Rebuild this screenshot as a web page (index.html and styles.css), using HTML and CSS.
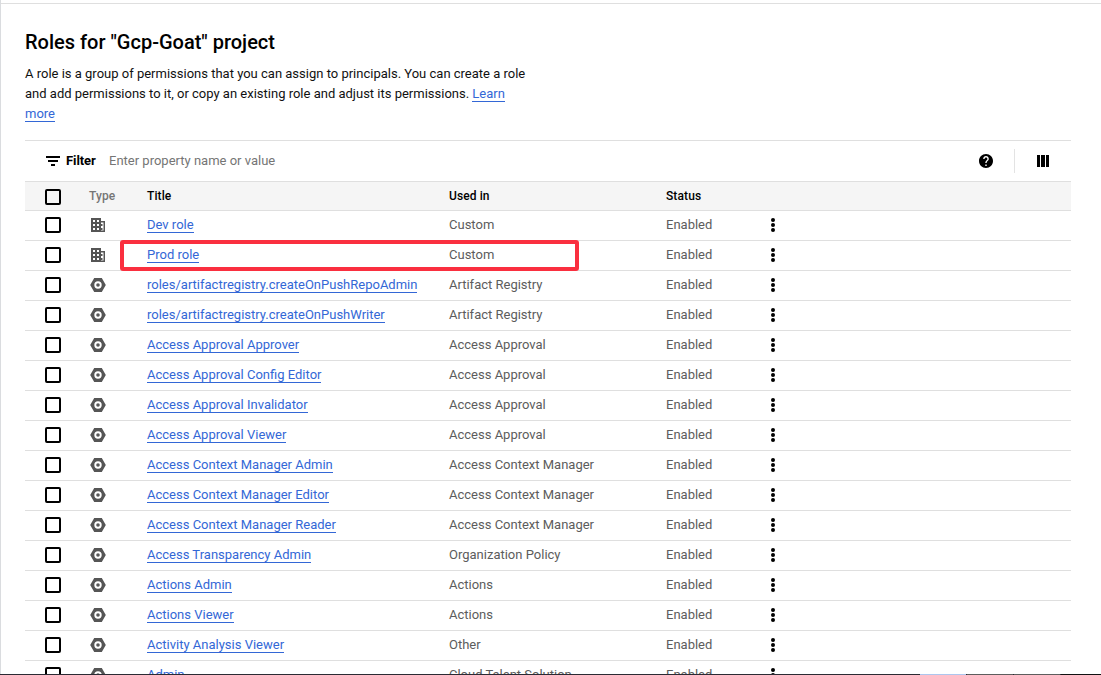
FILE: index.html
```html
<!DOCTYPE html>
<html lang="en">
<head>
<meta charset="utf-8">
<title>Roles</title>
<link rel="stylesheet" href="styles.css">
</head>
<body>
<svg class="defs" aria-hidden="true">
  <symbol id="org" viewBox="0 0 14 14"><path fill-rule="evenodd" d="M0 0h10v3h4v11H0zM2 2v2h2V2zM6 2v2h2V2zM2 6v2h2V6zM6 6v2h2V6zM2 10v2h2v-2zM6 10v2h2v-2zM10 4.500v1.500h1.500v2H10v2h1.500v2H10v.5h2.500v-8z"/></symbol>
  <symbol id="hex" viewBox="0 0 16 14"><path fill-rule="evenodd" d="M4.200 0h7.600L15.800 7l-4 7H4.200L.2 7zM8 3.300a3.700 3.700 0 1 0 0 7.400 3.700 3.700 0 0 0 0-7.400z"/><circle cx="8" cy="7" r="1.800"/></symbol>
  <symbol id="dots" viewBox="0 0 4 14"><circle cx="2" cy="2" r="2"/><circle cx="2" cy="7" r="2"/><circle cx="2" cy="12" r="2"/></symbol>
</svg>
<main class="page">
  <h1 class="title">Roles for "Gcp-Goat" project</h1>
  <p class="intro">A role is a group of permissions that you can assign to principals. You can create a role and add permissions to it, or copy an existing role and adjust its permissions. <a class="link">Learn more</a></p>
  <div class="filter">
    <svg class="filter-icon" viewBox="0 0 14 10"><path d="M0 0h14v2H0zM2 4h10v2H2zM5 8h4v2H5z"/></svg>
    <span class="filter-label">Filter</span>
    <span class="filter-hint">Enter property name or value</span>
    <svg class="help" viewBox="2 2 20 20"><path d="M12 2C6.480 2 2 6.480 2 12s4.480 10 10 10 10-4.480 10-10S17.520 2 12 2zm1 17h-2v-2h2v2zm2.070-7.750l-.9.920C13.450 12.900 13 13.500 13 15h-2v-.5c0-1.100.45-2.100 1.170-2.830l1.240-1.260c.37-.36.59-.86.59-1.410 0-1.100-.9-2-2-2s-2 .9-2 2H8c0-2.210 1.790-4 4-4s4 1.790 4 4c0 .88-.36 1.680-.93 2.250z"/></svg>
    <span class="divider"></span>
    <svg class="columns" viewBox="0 0 12 12"><path d="M0 0h3v12H0zM4 0h4v12H4zM9 0h3v12H9z"/></svg>
  </div>
  <div class="row head"><i class="check"></i><span class="type">Type</span><span>Title</span><span>Used in</span><span>Status</span></div>
  <div id="rows"></div>
</main>
<div class="highlight"></div>
<div class="taskbar"><i class="task active"></i><i class="task"></i><i class="task"></i><i class="tray"></i></div>
<script src="rows.js"></script>
</body>
</html>
```
FILE: styles.css
```css
* { box-sizing: border-box; }
body { margin: 0; height: 675px; overflow: hidden; position: relative; background: #fff; font-family: Roboto, sans-serif; font-size: 13px; color: #111; }
.defs { position: absolute; width: 0; height: 0; }
.page { height: 675px; overflow: hidden; border-left: 1px solid #dadcdf; padding: 3px 30px 0 24px; background: linear-gradient(#dfdfdf, #dfdfdf) 0 3px / 100% 1px no-repeat; }
.title { margin: 25px 0 0; font-size: 20px; line-height: 28px; font-weight: 500; color: #000; }
.intro { margin: 8px 0 0; width: 505px; line-height: 20px; }
.link { color: #3367d6; border-bottom: 1px solid #3367d6; }
.filter { margin-top: 16px; height: 41px; border-top: 1px solid #dfdfdf; display: flex; align-items: center; padding: 0 22px 0 21px; }
.filter-icon { width: 14px; height: 10px; }
.filter-label { margin-left: 6px; width: 43px; padding-bottom: 2px; font-weight: 700; letter-spacing: -.1px; color: #000; }
.filter-hint { color: #757575; flex: 1; padding-bottom: 2px; }
.help { width: 14px; height: 14px; }
.divider { width: 1px; height: 24px; background: #e3e3e3; margin: 0 22px 0 21px; }
.columns { width: 12px; height: 12px; }
.row { display: grid; grid-template-columns: 44px 58px 302px 217px 105px 4px; padding: 0 0 2px 20px; align-items: center; height: 30px; border-bottom: 1px solid #dfdfdf; color: #5c5c5c; }
.head { padding-bottom: 0; background: #f5f5f5; border-top: 1px solid #dfdfdf; color: #000; font-weight: 500; font-size: 12px; letter-spacing: .1px; }
.head .type { color: #757575; letter-spacing: .1px; }
.check { width: 16px; height: 16px; border: 2px solid #000; border-radius: 2px; }
.head .check { margin-top: 2px; }
.org { width: 14px; height: 14px; margin: 1px 0 0 2px; fill: #555; }
.hex { width: 16px; height: 14px; margin: 1px 0 0 1px; fill: #555; }
.dots { width: 4px; height: 14px; fill: #000; }
.highlight { position: absolute; left: 120px; top: 240px; width: 459px; height: 31px; border: 4px solid #fa2f3f; border-radius: 3px; }
.taskbar { position: absolute; left: 0; right: 0; bottom: 0; height: 1px; padding-left: 920px; background: #2b2a33; display: flex; gap: 1px; }
.task { width: 46px; background: #5d5d5d; }
.active { background: #adc6ee; }
.tray { flex: 1; background: #111; }
```
FILE: rows.js
```js
const roles = [
  ["org", "Dev role", "Custom"],
  ["org", "Prod role", "Custom"],
  ["hex", "roles/artifactregistry.createOnPushRepoAdmin", "Artifact Registry"],
  ["hex", "roles/artifactregistry.createOnPushWriter", "Artifact Registry"],
  ["hex", "Access Approval Approver", "Access Approval"],
  ["hex", "Access Approval Config Editor", "Access Approval"],
  ["hex", "Access Approval Invalidator", "Access Approval"],
  ["hex", "Access Approval Viewer", "Access Approval"],
  ["hex", "Access Context Manager Admin", "Access Context Manager"],
  ["hex", "Access Context Manager Editor", "Access Context Manager"],
  ["hex", "Access Context Manager Reader", "Access Context Manager"],
  ["hex", "Access Transparency Admin", "Organization Policy"],
  ["hex", "Actions Admin", "Actions"],
  ["hex", "Actions Viewer", "Actions"],
  ["hex", "Activity Analysis Viewer", "Other"],
  ["hex", "Admin", "Cloud Talent Solution"]
];
document.getElementById("rows").innerHTML = roles.map(([icon, title, used]) =>
  `<div class="row"><i class="check"></i><svg class="${icon}"><use href="#${icon}"/></svg><span><a class="link">${title}</a></span><span>${used}</span><span>Enabled</span><svg class="dots"><use href="#dots"/></svg></div>`
).join("");
```
